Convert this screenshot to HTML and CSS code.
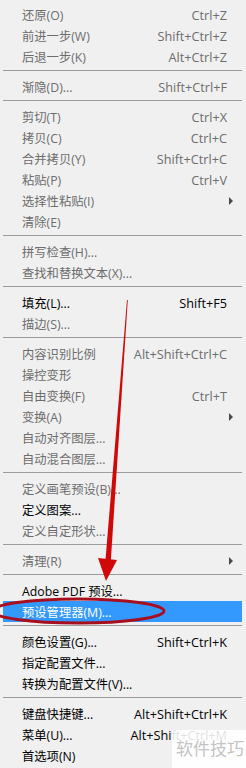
FILE: index.html
```html
<!DOCTYPE html>
<html lang="zh-CN">
<head>
    <meta charset="UTF-8">
    <title>编辑菜单</title>
    <link rel="stylesheet" href="styles.css">
</head>
<body>

<div class="menu-wrap">
    <ul class="menu">
        <li class="item off"><span class="label">还原(O)</span><span class="key">Ctrl+Z</span></li>
        <li class="item off"><span class="label">前进一步(W)</span><span class="key">Shift+Ctrl+Z</span></li>
        <li class="item off"><span class="label">后退一步(K)</span><span class="key">Alt+Ctrl+Z</span></li>
        <li class="sep"></li>
        <li class="item off"><span class="label">渐隐(D)...</span><span class="key">Shift+Ctrl+F</span></li>
        <li class="sep"></li>
        <li class="item off"><span class="label">剪切(T)</span><span class="key">Ctrl+X</span></li>
        <li class="item off"><span class="label">拷贝(C)</span><span class="key">Ctrl+C</span></li>
        <li class="item off"><span class="label">合并拷贝(Y)</span><span class="key">Shift+Ctrl+C</span></li>
        <li class="item off"><span class="label">粘贴(P)</span><span class="key">Ctrl+V</span></li>
        <li class="item off sub"><span class="label">选择性粘贴(I)</span><span class="arrow"></span></li>
        <li class="item off"><span class="label">清除(E)</span></li>
        <li class="sep"></li>
        <li class="item off"><span class="label">拼写检查(H)...</span></li>
        <li class="item off"><span class="label">查找和替换文本(X)...</span></li>
        <li class="sep"></li>
        <li class="item"><span class="label">填充(L)...</span><span class="key">Shift+F5</span></li>
        <li class="item off"><span class="label">描边(S)...</span></li>
        <li class="sep"></li>
        <li class="item off"><span class="label">内容识别比例</span><span class="key">Alt+Shift+Ctrl+C</span></li>
        <li class="item off"><span class="label">操控变形</span></li>
        <li class="item off"><span class="label">自由变换(F)</span><span class="key">Ctrl+T</span></li>
        <li class="item off sub"><span class="label">变换(A)</span><span class="arrow"></span></li>
        <li class="item off"><span class="label">自动对齐图层...</span></li>
        <li class="item off"><span class="label">自动混合图层...</span></li>
        <li class="sep"></li>
        <li class="item off"><span class="label">定义画笔预设(B)...</span></li>
        <li class="item"><span class="label">定义图案...</span></li>
        <li class="item off"><span class="label">定义自定形状...</span></li>
        <li class="sep"></li>
        <li class="item off sub"><span class="label">清理(R)</span><span class="arrow"></span></li>
        <li class="sep"></li>
        <li class="item"><span class="label">Adobe PDF 预设...</span></li>
        <li class="item active"><span class="label">预设管理器(M)...</span></li>
        <li class="sep"></li>
        <li class="item"><span class="label">颜色设置(G)...</span><span class="key">Shift+Ctrl+K</span></li>
        <li class="item"><span class="label">指定配置文件...</span></li>
        <li class="item"><span class="label">转换为配置文件(V)...</span></li>
        <li class="sep"></li>
        <li class="item"><span class="label">键盘快捷键...</span><span class="key">Alt+Shift+Ctrl+K</span></li>
        <li class="item"><span class="label">菜单(U)...</span><span class="key">Alt+Shift+Ctrl+M</span></li>
        <li class="item"><span class="label">首选项(N)</span></li>
    </ul>

    <!-- 红色箭头和圈 -->
    <svg class="marks" width="246" height="768" viewBox="0 0 246 768">
        <polygon points="127,300 127.8,300 110.8,561 105.4,561" fill="#d00808"/>
        <polygon points="98,558 117,560 106,581" fill="#d00808"/>
        <ellipse cx="78" cy="611" rx="86" ry="12" fill="none" stroke="#a80f1e" stroke-width="3"/>
    </svg>

    <div class="watermark">软件技巧</div>
</div>

</body>
</html>
```

FILE: styles.css
```css
/* 菜单 */
body {
    margin: 0;
    background-color: #f0f0f0;
    font-family: "Open Sans", "Noto Sans CJK SC", sans-serif;
    font-size: 12px;
}
.menu-wrap {
    position: relative;
    width: 246px;
    height: 768px;
    overflow: hidden;
}
.menu {
    list-style: none;
    margin: 0;
    padding: 4px 0 0 0;
}
.item {
    display: flex;
    align-items: center;
    height: 21px;
    margin: 0 4px 0 3px;
    padding: 0 15px 0 19px;
    color: #000;
    white-space: nowrap;
}
.item.off {
    color: #6d6d6d;
}
.label {
    flex: 1;
    font-size: 12.3px;
}
.key {
    text-align: right;
    font-size: 12.7px;
}
.arrow {
    width: 0;
    height: 0;
    margin-right: -6px;
    border-top: 4px solid transparent;
    border-bottom: 4px solid transparent;
    border-left: 4px solid #4a4a4a;
}
.item.active {
    background-color: #3399ff;
    color: #fff;
}
.sep {
    height: 1px;
    margin: 3px 4px 5px 3px;
    background-color: #9c9c9c;
}

/* 上面的标记 */
.marks {
    position: absolute;
    top: 0;
    left: 0;
    pointer-events: none;
}
.watermark {
    position: absolute;
    left: 172px;
    top: 730px;
    width: 74px;
    height: 38px;
    background-color: rgba(255, 255, 255, 0.88);
    color: #c4c4c4;
    font-family: "Noto Sans CJK SC", sans-serif;
    font-size: 17px;
    line-height: 36px;
    padding-left: 4px;
    box-sizing: border-box;
}
```
